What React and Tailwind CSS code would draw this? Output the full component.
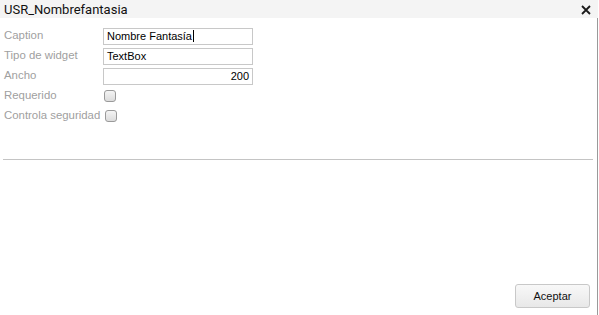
export default function App() {
  const rows = [
    { label: 'Caption', value: 'Nombre Fantasía', caret: true },
    { label: 'Tipo de widget', value: 'TextBox' },
    { label: 'Ancho', value: '200', right: true },
  ];
  const checks = ['Requerido', 'Controla seguridad'];

  return (
    <div className="w-[599px] h-[315px] bg-white flex flex-col overflow-hidden">
      <div className="h-[18px] w-[598px] bg-[#f4f4f4] flex items-center justify-between pl-[4px] pr-[7px]">
        <span className="text-[13px] leading-none text-[#111] font-['Roboto',sans-serif]">USR_Nombrefantasia</span>
        <svg width="10" height="10" viewBox="0 0 10 10" className="mt-[1px]">
          <path d="M1 1 L9 9 M9 1 L1 9" stroke="#1a1a1a" strokeWidth="1.8" />
        </svg>
      </div>
      <div className="w-[598px] flex-1 border-r border-[#9a9a9a] flex flex-col">
        <div className="pt-[8px] pl-[4px] flex flex-col">
          {rows.map((r) => (
            <div key={r.label} className="h-[20px] flex items-center">
              <span className="w-[99px] text-[11.4px] text-[#a0a0a0] font-['Liberation_Sans',Arial,sans-serif]">{r.label}</span>
              <div className={`w-[150px] h-[17px] border border-[#c8c8c8] flex items-center px-[3px] text-[11px] text-black font-['Liberation_Sans',Arial,sans-serif] ${r.right ? 'justify-end' : ''}`}>
                {r.value}
                {r.caret && <span className="inline-block w-[1px] h-[12px] bg-black ml-[1px]" />}
              </div>
            </div>
          ))}
          {checks.map((c, i) => (
            <div key={c} className="h-[20px] flex items-center">
              <span className={`${i === 0 ? 'w-[100px]' : 'w-[101px]'} text-[11.4px] text-[#a0a0a0] font-['Liberation_Sans',Arial,sans-serif] whitespace-nowrap`}>{c}</span>
              <span className="w-[12px] h-[12px] rounded-[3px] border border-[#9a9a9a] bg-gradient-to-b from-[#f4f4f4] to-[#dcdcdc]" />
            </div>
          ))}
        </div>
        <div className="mt-[33px] mx-[3px] w-[590px] h-[1px] bg-[#c4c4c4]" />
        <div className="flex-1" />
        <div className="flex justify-end pr-[7px] pb-[7px]">
          <button className="w-[75px] h-[24px] rounded-[3px] border border-[#c8c8c8] bg-gradient-to-b from-[#f8f8f8] to-[#e8e8e8] text-[11px] text-[#111] font-['Liberation_Sans',Arial,sans-serif]">
            Aceptar
          </button>
        </div>
      </div>
    </div>
  );
}
